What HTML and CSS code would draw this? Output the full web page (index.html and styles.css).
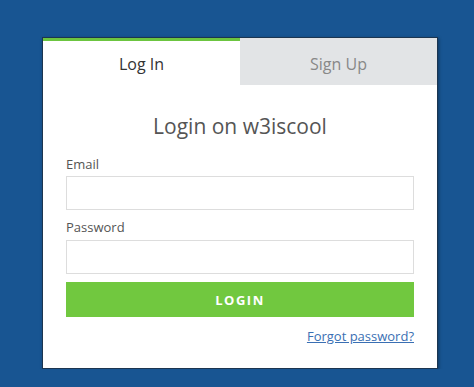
FILE: index.html
```html
<!DOCTYPE html>
<html lang="en">
<head>
    <meta charset="UTF-8">
    <meta name="viewport" content="width=device-width, initial-scale=1.0">
    <title>Login on w3iscool</title>
    <link rel="stylesheet" href="styles.css">
</head>
<body>
    <div class="card">
        <div class="tabs">
            <div class="tab active">Log In</div>
            <div class="tab">Sign Up</div>
        </div>
        <form class="login-form" onsubmit="return false;">
            <h1>Login on w3iscool</h1>
            <label for="email">Email</label>
            <input type="email" id="email">
            <label for="password" class="second">Password</label>
            <input type="password" id="password">
            <button type="submit">LOGIN</button>
            <div class="forgot"><a href="#">Forgot password?</a></div>
        </form>
    </div>
</body>
</html>
```

FILE: styles.css
```css
body {
    font-family: 'Open Sans', 'Noto Sans', sans-serif;
    background-color: #185592;
    margin: 0;
    padding: 37px 0 0 42px;
}
.card {
    background: white;
    width: 394px;
    border: 1px solid #1c3550;
    box-shadow: 1px 1px 3px rgba(0, 0, 0, 0.35);
}
.tabs {
    display: flex;
}
.tab {
    flex: 1;
    height: 42px;
    padding-top: 5px;
    line-height: 42px;
    text-align: center;
    font-size: 16px;
    color: #888;
    background: #e2e4e6;
}
.tab.active {
    background: white;
    color: #333;
    border-top: 3px solid #6cc540;
    padding-top: 2px;
}
.login-form {
    padding: 0 23px 22px;
}
h1 {
    margin: 26px 0 13px;
    font-size: 21px;
    line-height: 30px;
    font-weight: normal;
    text-align: center;
    color: #555;
}
label {
    display: block;
    font-size: 13px;
    line-height: 20px;
    color: #555;
    margin-bottom: 2px;
}
label.second {
    margin-top: 7px;
    margin-bottom: 3px;
}
input {
    display: block;
    width: 100%;
    height: 34px;
    border: 1px solid #ddd;
    box-sizing: border-box;
    padding: 6px 10px;
    margin: 0;
}
button {
    display: block;
    width: 100%;
    height: 35px;
    margin-top: 8px;
    border: none;
    background-color: #71c83f;
    color: white;
    font-family: 'Open Sans', sans-serif;
    font-weight: bold;
    font-size: 13px;
    letter-spacing: 1.5px;
    cursor: pointer;
}
.forgot {
    margin-top: 9px;
    text-align: right;
    font-size: 13px;
    line-height: 20px;
}
.forgot a {
    color: #3a6fb3;
}
```
